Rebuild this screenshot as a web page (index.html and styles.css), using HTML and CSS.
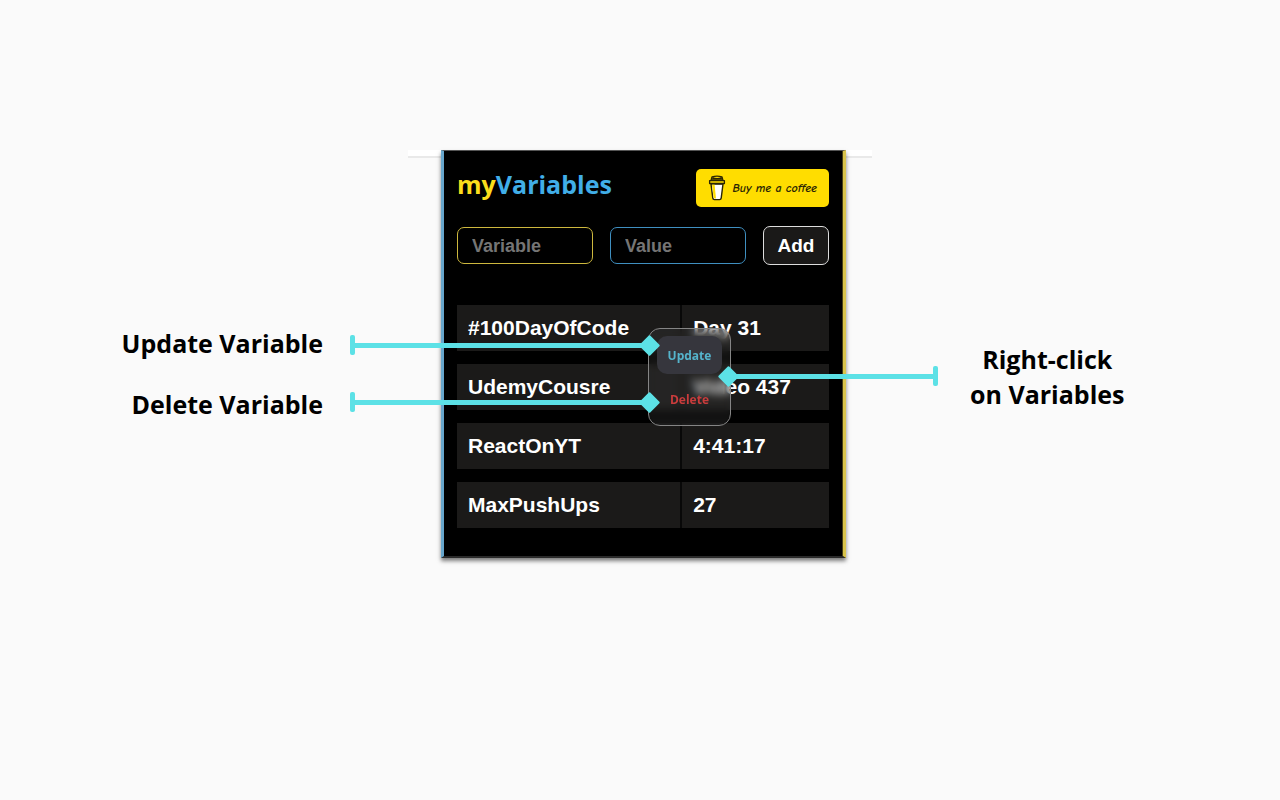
FILE: index.html
```html
<!DOCTYPE html>
<html lang="en">
<head>
<meta charset="utf-8">
<meta name="viewport" content="width=device-width, initial-scale=1">
<title>myVariables</title>
<link rel="stylesheet" href="styles.css">
</head>
<body>
<main class="stage">
  <div class="notes notes-left">
    <p class="note">Update Variable</p>
    <p class="note">Delete Variable</p>
  </div>

  <div class="frame">
    <section class="panel">
      <header class="header">
        <h1 class="title"><span class="title-my">my</span>Variables</h1>
        <a class="coffee" href="#coffee">
          <svg class="cup" viewBox="0 0 18 26" aria-hidden="true">
            <path d="M3 9 4.8 23.2Q5 24.6 6.4 24.6h5.2q1.4 0 1.6-1.4L15 9z" fill="#fff" stroke="#2a2504" stroke-width="1.4"/>
            <path d="M4 9.6 5.6 22.5Q5.8 23.6 7 23.6h1L6.6 9.6z" fill="#fd0"/>
            <path d="M1.6 5.6h14.8v2.9H1.6z" fill="#fd0" stroke="#2a2504" stroke-width="1.3" stroke-linejoin="round"/>
            <path d="M3 5.4 4 1.8Q9 .6 14 1.8l1 3.6z" fill="#fd0" stroke="#2a2504" stroke-width="1.3" stroke-linejoin="round"/>
            <path d="M4.4 2.6q4.6 2 9.4 0M4 4.2h10" fill="none" stroke="#2a2504" stroke-width="1.2"/>
          </svg>
          <span class="coffee-text">Buy me a coffee</span>
        </a>
      </header>

      <form class="form">
        <input class="field field-name" type="text" placeholder="Variable" aria-label="Variable">
        <input class="field field-value" type="text" placeholder="Value" aria-label="Value">
        <button class="add" type="button">Add</button>
      </form>

      <table class="variables">
        <tbody>
          <tr><td class="name">#100DayOfCode</td><td class="value">Day 31</td></tr>
          <tr><td class="name">UdemyCousre</td><td class="value">Video 437</td></tr>
          <tr><td class="name">ReactOnYT</td><td class="value">4:41:17</td></tr>
          <tr><td class="name">MaxPushUps</td><td class="value">27</td></tr>
        </tbody>
      </table>
    </section>

    <div class="menu">
      <button class="menu-item update" type="button">Update</button>
      <button class="menu-item delete" type="button">Delete</button>
    </div>

    <div class="pointer pointer-update"></div>
    <div class="pointer pointer-delete"></div>
    <div class="pointer pointer-click"></div>
  </div>

  <div class="notes notes-right">
    <p class="note">Right-click<br>on Variables</p>
  </div>
</main>
</body>
</html>
```
FILE: styles.css
```css
* {
  box-sizing: border-box;
}

body {
  margin: 0;
  background: #fafafa;
  color: #000;
  font-family: "Open Sans", "Noto Sans", sans-serif;
}

.stage {
  display: grid;
  grid-template-columns: 1fr minmax(0, 405px) 1fr;
  align-items: start;
  padding: 150px 0 32px 7px;
}

.note {
  margin: 0;
  font-size: 25px;
  font-weight: 700;
  white-space: nowrap;
}

.notes-left {
  padding: 163px 118px 0 0;
  text-align: right;
  line-height: 61px;
}

.notes-right {
  justify-self: start;
  padding: 192px 0 0 124px;
  text-align: center;
  line-height: 35px;
}

.frame {
  position: relative;
  z-index: 0;
}

.frame::before {
  content: "";
  position: absolute;
  z-index: -1;
  top: 0;
  left: -33px;
  right: -26px;
  height: 6px;
  background: #fff;
  border-bottom: 2px solid #e9e9e9;
}

.panel {
  padding: 18px 14px 15px 13px;
  background: #000;
  border-style: solid;
  border-width: 1px 3px 2px;
  border-color: #555 #d9c44c #2b2b2b #67a6cc;
  box-shadow: inset -1px 0 #4a4216, 0 3px 4px rgba(0, 0, 0, 0.5);
}

.header {
  display: flex;
  justify-content: space-between;
  align-items: flex-start;
}

.title {
  margin: 0;
  color: #41aee8;
  font-family: "Open Sans", "Noto Sans", sans-serif;
  font-size: 25px;
  line-height: 30px;
}

.title-my {
  color: #fbdd1c;
}

.coffee {
  display: flex;
  align-items: center;
  gap: 6px;
  height: 38px;
  padding: 0 12px;
  background: #fd0;
  border-radius: 5px;
  color: #2a2504;
  text-decoration: none;
}

.cup {
  width: 18px;
  height: 26px;
}

.coffee-text {
  font-family: "Comic Neue", "Lato", cursive;
  font-size: 12px;
  font-style: italic;
  font-weight: 700;
  white-space: nowrap;
}

.form {
  display: flex;
  align-items: center;
  gap: 17px;
  margin: 19px 0 27px;
}

.field {
  flex: 1;
  min-width: 0;
  height: 37px;
  padding: 2px 14px 0;
  background: #000;
  border: 1px solid #cdb83e;
  border-radius: 7px;
  color: #fff;
  font: 700 18px "Liberation Sans", Arial, sans-serif;
}

.field-value {
  border-color: #3f8fc0;
}

.field::placeholder {
  color: #757575;
  opacity: 1;
}

.add {
  width: 66px;
  height: 39px;
  padding: 0;
  background: #1a1918;
  border: 1px solid #ddd;
  border-radius: 7px;
  color: #fff;
  font: 700 19px "Liberation Sans", Arial, sans-serif;
}

.variables {
  width: 100%;
  border-spacing: 0 13px;
  color: #fff;
  font: 700 21px "Liberation Sans", Arial, sans-serif;
}

.variables td {
  height: 46px;
  padding: 0 0 0 11px;
  background: #1b1a19;
}

.variables .name {
  width: 60%;
}

.variables .value {
  border-left: 2px solid #080808;
}

.menu {
  position: absolute;
  top: 178px;
  left: 207px;
  display: flex;
  flex-direction: column;
  gap: 6px;
  width: 83px;
  padding: 7px 8px;
  background: rgba(80, 80, 80, 0.2);
  border: 1px solid #858585;
  border-radius: 12px;
  backdrop-filter: blur(4px);
}

.menu-item {
  height: 38px;
  padding: 0;
  background: transparent;
  border: 0;
  border-radius: 10px;
  font: 700 12px "Open Sans", "Noto Sans", sans-serif;
}

.update {
  background: #36363d;
  color: #55b4cc;
}

.delete {
  color: #c93c3c;
}

/* Connector: a bar with an end cap on one side and a diamond on the other */
.pointer {
  position: absolute;
  left: -91px;
  width: 300px;
  height: 5px;
  background: #5ce1e6;
}

.pointer::before {
  content: "";
  position: absolute;
  top: -8px;
  left: 0;
  width: 5px;
  height: 20px;
  background: #5ce1e6;
  border-radius: 2px;
}

.pointer::after {
  content: "";
  position: absolute;
  top: -5px;
  right: -7px;
  width: 15px;
  height: 15px;
  background: #5ce1e6;
  border-radius: 1px;
  transform: rotate(45deg);
}

.pointer-update {
  top: 193px;
}

.pointer-delete {
  top: 250px;
}

.pointer-click {
  top: 224px;
  left: 287px;
  width: 210px;
}

.pointer-click::before {
  left: auto;
  right: 0;
}

.pointer-click::after {
  right: auto;
  left: -7px;
}
```
